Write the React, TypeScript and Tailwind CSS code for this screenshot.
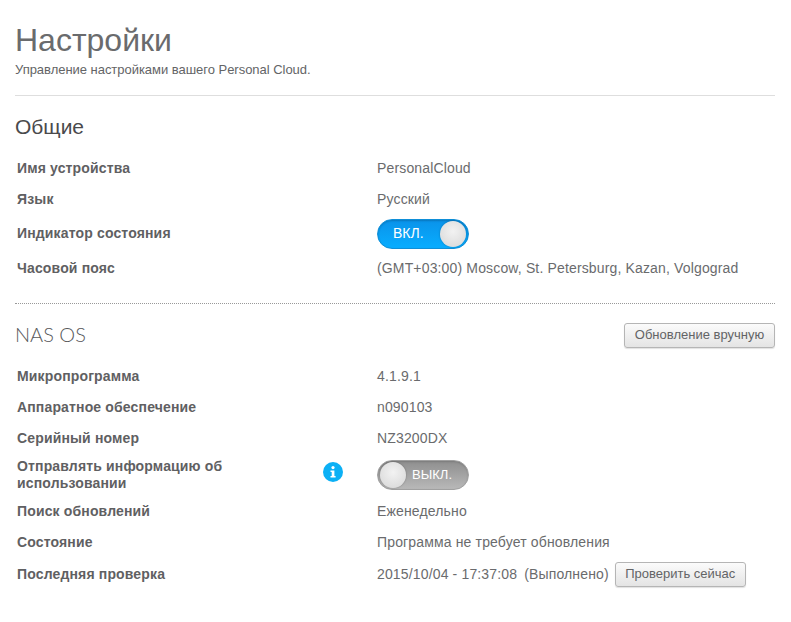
import React from 'react';

const Row = ({ label, children, className = 'h-[31px]' }: { label: React.ReactNode; children: React.ReactNode; className?: string }) => (
  <div className={`flex items-center ${className}`}>
    <div className="w-[362px] pl-[2px] pr-[100px] text-[14px] leading-[17px] font-bold tracking-[0.15px] text-[#5f6062]">{label}</div>
    <div className="flex items-center text-[14px] tracking-[0.15px] text-[#6a6b6d]">{children}</div>
  </div>
);

const Knob = () => (
  <span className="h-[26px] w-[26px] rounded-full bg-[radial-gradient(circle_at_50%_40%,#f2f2f2,#d6d6d6)] shadow-[0_0_2px_rgba(0,0,0,0.3)]" />
);

const Toggle = ({ on }: { on: boolean }) =>
  on ? (
    <div className="flex h-[30px] w-[92px] items-center justify-between rounded-full border border-[#0f8fd8] bg-gradient-to-b from-[#0a93ea] to-[#08adff] pl-[15px] pr-[2px] shadow-[inset_0_1px_2px_rgba(0,0,0,0.2)]">
      <span className="text-[14px] tracking-normal text-white">ВКЛ.</span>
      <Knob />
    </div>
  ) : (
    <div className="flex h-[30px] w-[92px] items-center justify-between rounded-full border border-[#a0a0a0] bg-gradient-to-b from-[#8f8f8f] to-[#b8b8b8] pl-[2px] pr-[16px] shadow-[inset_0_1px_2px_rgba(0,0,0,0.15)]">
      <Knob />
      <span className="text-[13px] tracking-normal text-white">ВЫКЛ.</span>
    </div>
  );

const Btn = ({ children, className = '' }: { children: React.ReactNode; className?: string }) => (
  <button className={`h-[25px] rounded-[3px] border border-[#b5b5b5] bg-gradient-to-b from-[#fbfbfb] to-[#e4e4e4] text-[13px] tracking-normal text-[#636466] shadow-[0_1px_1px_rgba(0,0,0,0.12)] ${className}`}>
    {children}
  </button>
);

export default function App() {
  return (
    <div className="h-[622px] w-[791px] overflow-hidden bg-white pl-[15px] pr-[16px] pt-[22px] font-['Liberation_Sans',Arial,sans-serif]">
      <h1 className="text-[32px] leading-[37px] text-[#6a6b6d]">Настройки</h1>
      <p className="mt-[3px] text-[13px] leading-[15px] tracking-[-0.03px] text-[#636466]">Управление настройками вашего Personal Cloud.</p>
      <div className="mt-[18px] border-t border-[#dedede]" />

      <h2 className="mt-[19px] text-[21px] leading-[24px] text-[#4a4a4c]">Общие</h2>
      <div className="mt-[14px]">
        <Row label="Имя устройства">PersonalCloud</Row>
        <Row label="Язык">Русский</Row>
        <Row label="Индикатор состояния" className="h-[37px]">
          <Toggle on />
        </Row>
        <Row label="Часовой пояс" className="h-[32px]">(GMT+03:00) Moscow, St. Petersburg, Kazan, Volgograd</Row>
      </div>

      <div className="mt-[19px] border-t border-dotted border-[#999999]" />

      <div className="mt-[18px] flex h-[26px] items-center justify-between">
        <h2 className="pb-[2px] font-['Lato',sans-serif] text-[20px] font-light text-[#58595b]">NAS OS</h2>
        <Btn className="w-[151px]">Обновление вручную</Btn>
      </div>
      <div className="mt-[13px]">
        <Row label="Микропрограмма">4.1.9.1</Row>
        <Row label="Аппаратное обеспечение">n090103</Row>
        <Row label="Серийный номер">NZ3200DX</Row>
        <Row
          className="relative h-[42px]"
          label={
            <>
              Отправлять информацию об использовании
              <span className="absolute left-[308px] top-[8px] flex h-[20px] w-[20px] items-center justify-center rounded-full bg-[#0cb0f5]">
                <svg width="10" height="12" viewBox="0 0 10 12" fill="#fff">
                  <circle cx="5" cy="1.6" r="1.6" />
                  <path d="M2.5 4.4H6.4V10H7.6V11.6H2.5V10H3.7V6H2.5Z" />
                </svg>
              </span>
            </>
          }
        >
          <Toggle on={false} />
        </Row>
        <Row label="Поиск обновлений">Еженедельно</Row>
        <Row label="Состояние">Программа не требует обновления</Row>
        <Row label="Последняя проверка" className="h-[32px]">
          <span>2015/10/04 - 17:37:08</span>
          <span className="ml-[7px]">(Выполнено)</span>
          <Btn className="ml-[6px] w-[131px]">Проверить сейчас</Btn>
        </Row>
      </div>
    </div>
  );
}
